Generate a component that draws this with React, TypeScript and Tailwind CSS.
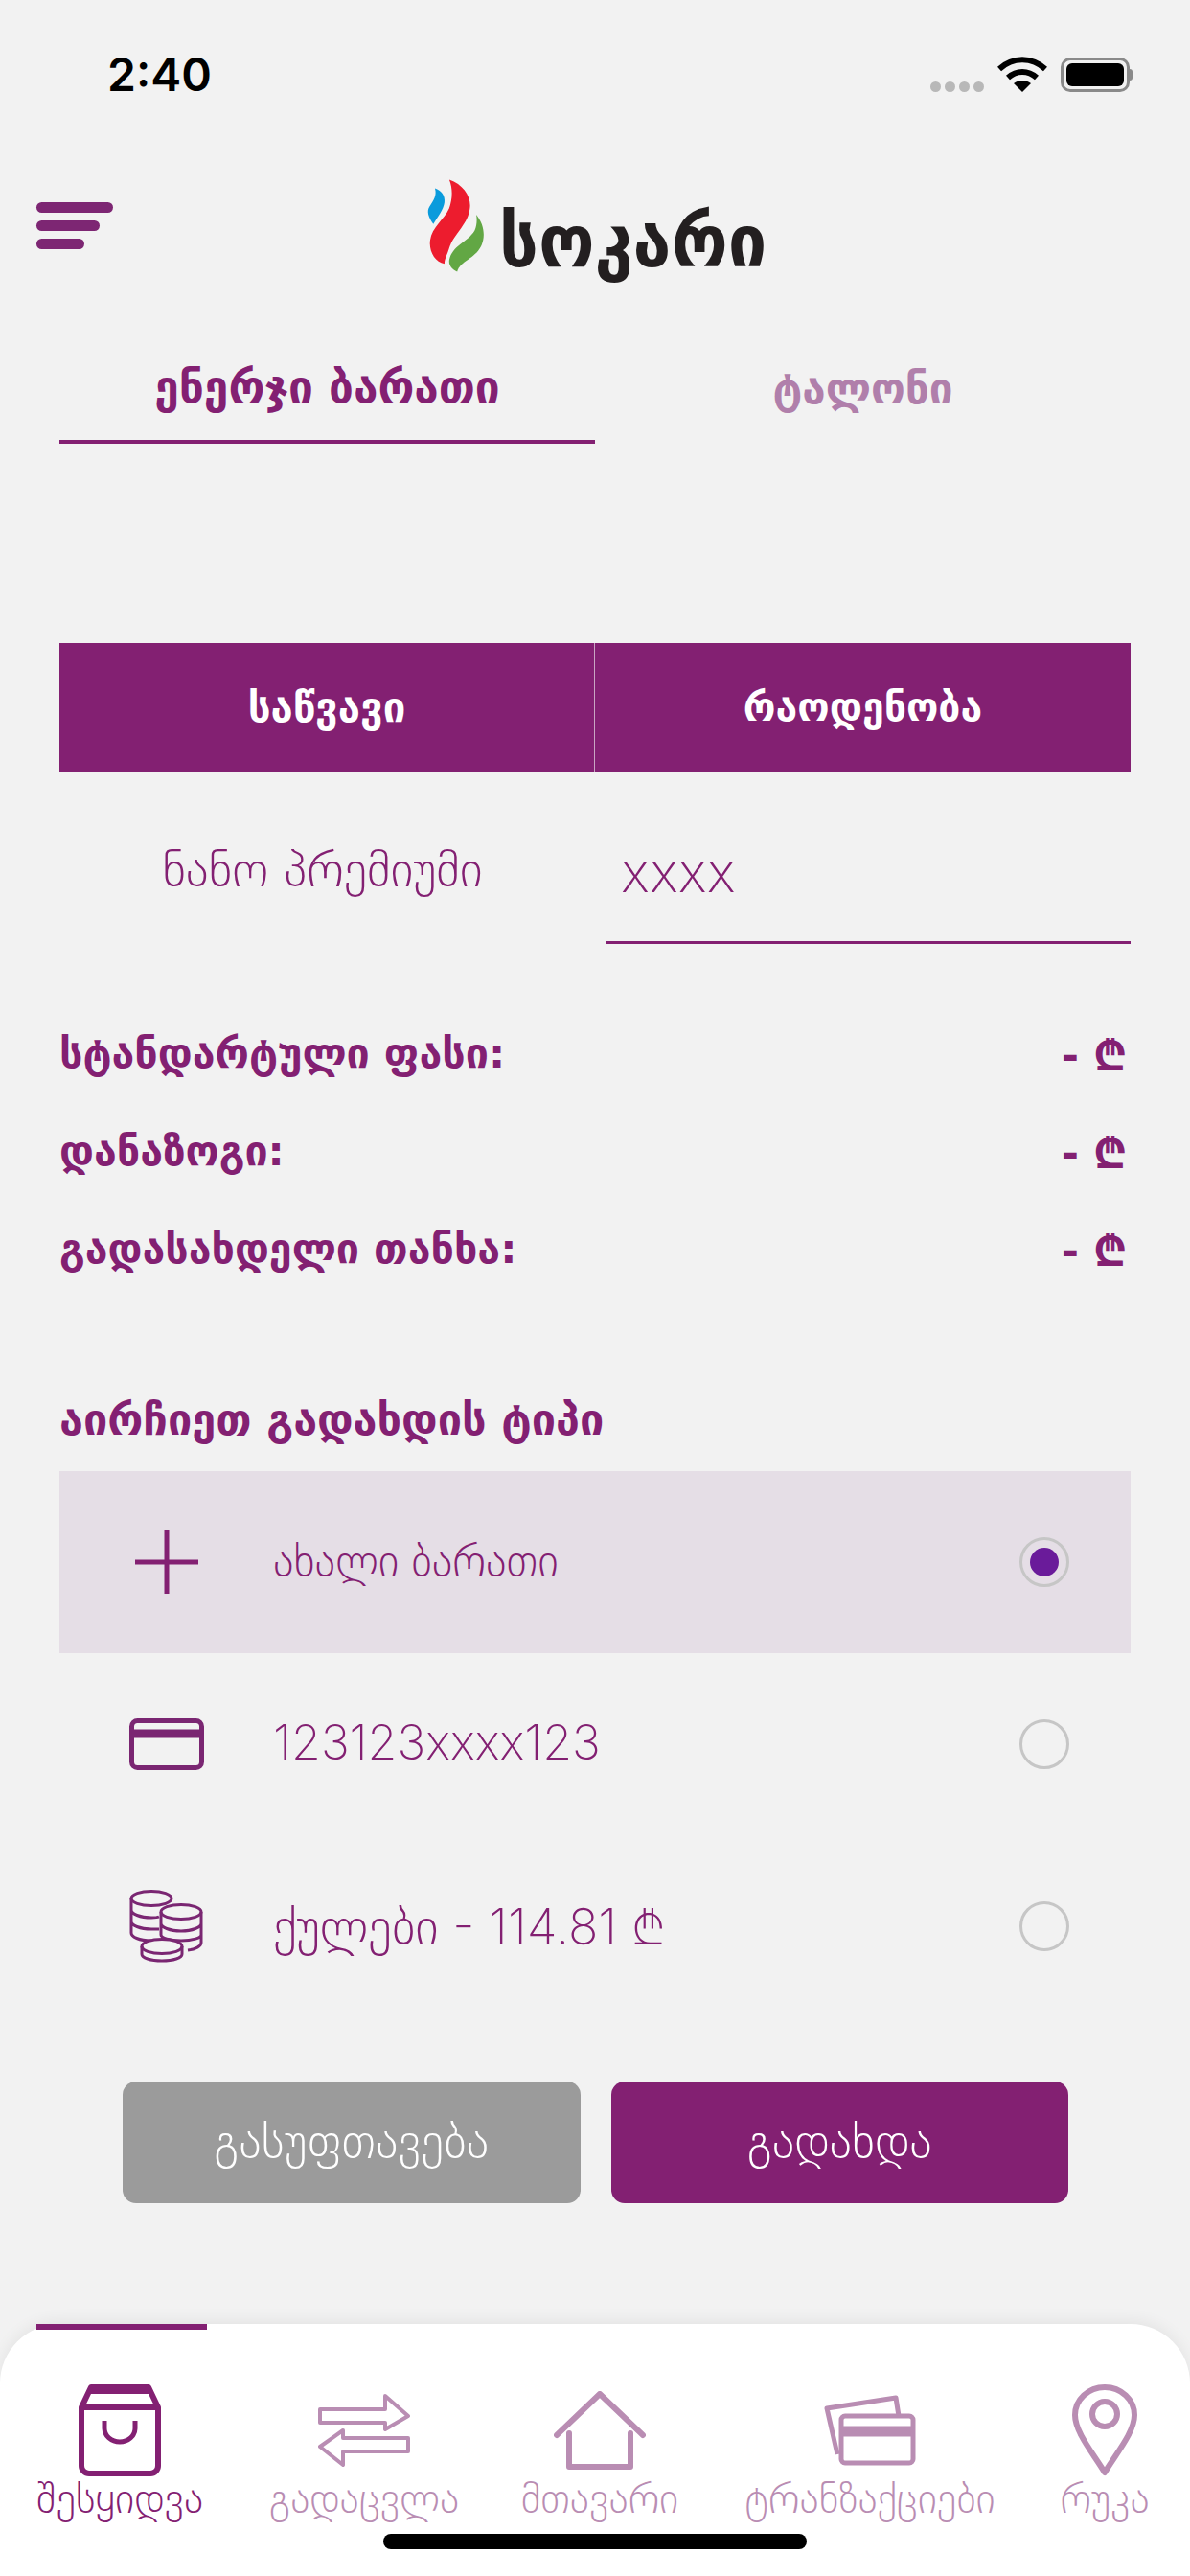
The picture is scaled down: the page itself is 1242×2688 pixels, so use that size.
const PURPLE = "#832072";
const FADED = "#b98db3";

function Flame() {
  return (
    <svg width="62" height="97" viewBox="-2 0 187 290" className="shrink-0">
      <path d="M25 27C45 33 58 50 55 72C52 95 35 115 20 140C5 120-2 100 8 85C20 65 32 50 25 27z" fill="#0a9bdc" />
      <path d="M70 0C115 15 140 55 135 90C130 140 85 170 70 215C62 240 55 250 55 265C25 260 5 225 10 190C15 150 55 125 70 90C80 60 82 30 70 0z" fill="#ed1c2e" />
      <path d="M155 110C180 140 185 180 170 210C150 250 105 255 95 290C75 280 65 265 72 245C85 205 130 195 150 160C157 145 158 125 155 110z" fill="#62a744" />
    </svg>
  );
}

function Radio({ on }: { on?: boolean }) {
  return (
    <span className="flex size-[52px] shrink-0 items-center justify-center rounded-full border-[3px] border-[#c6c6c6]">
      {on && <span className="size-[30px] rounded-full bg-[#6a1b9a]" />}
    </span>
  );
}

function PlusIcon() {
  return (
    <svg width="66" height="66" viewBox="0 0 66 66">
      <path d="M33 0v66M0 33h66" stroke={PURPLE} strokeWidth="5" fill="none" />
    </svg>
  );
}

function CardIcon() {
  return (
    <svg width="78" height="54" viewBox="0 0 78 54" fill="none">
      <rect x="2.5" y="2.5" width="73" height="49" rx="6" stroke="#7a2672" strokeWidth="5" />
      <path d="M2 16h74" stroke="#7a2672" strokeWidth="9" />
    </svg>
  );
}

function CoinsIcon() {
  const c = "#7a2672";
  return (
    <svg width="78" height="76" viewBox="0 0 78 76" fill="none" stroke={c} strokeWidth="3">
      <ellipse cx="23" cy="9" rx="21" ry="7.5" />
      <path d="M2 9v36c0 4 8 8 21 8M2 21c0 4 9 8 21 8 3 0 6 0 8-1M2 33c0 4 9 8 21 8h8" />
      <ellipse cx="54" cy="23" rx="21" ry="7.5" fill="#f2f2f2" />
      <path d="M33 23v24M75 23v32c0 4-6 7-14 8M33 35c0 4 9 8 21 8s21-4 21-8M33 47c0 3 9 6 21 6s21-3 21-6" />
      <ellipse cx="34" cy="59" rx="21" ry="7.5" fill="#f2f2f2" />
      <path d="M13 59v8c0 4 9 7 21 7s21-3 21-7v-8" />
    </svg>
  );
}

function BagIcon() {
  return (
    <svg width="86" height="96" viewBox="0 0 86 96" fill="none" stroke={PURPLE} strokeWidth="6" strokeLinejoin="round">
      <path d="M3 24 13 3h60l10 21v61a8 8 0 0 1-8 8H11a8 8 0 0 1-8-8z" />
      <path d="M3 24h80" />
      <path d="M13 6h60" strokeWidth="8" />
      <path d="M27 38v8a16 14 0 0 0 32 0v-8" strokeWidth="5" />
    </svg>
  );
}

function SwapIcon() {
  return (
    <svg width="96" height="76" viewBox="0 0 96 76" fill="none" stroke={FADED} strokeWidth="4" strokeLinejoin="round">
      <path d="M2 16h68V2l24 21-24 14V30H2z" />
      <path d="M94 46H26V38L2 55l24 19V60h68z" />
    </svg>
  );
}

function HomeIcon() {
  return (
    <svg width="96" height="82" viewBox="0 0 96 82" fill="none" stroke={FADED} strokeWidth="6" strokeLinecap="round" strokeLinejoin="round">
      <path d="M3 46 48 3l45 43" />
      <path d="M16 44v35h64V44" />
    </svg>
  );
}

function CardsIcon() {
  return (
    <svg width="96" height="74" viewBox="0 0 96 74" fill="none" stroke={FADED} strokeWidth="5" strokeLinejoin="round">
      <path d="M14 62 3 14 75 3l3 19" />
      <rect x="18" y="22" width="75" height="49" rx="4" />
      <path d="M18 38h75" strokeWidth="11" />
    </svg>
  );
}

function PinIcon() {
  return (
    <svg width="68" height="96" viewBox="0 0 68 96" fill="none" stroke={FADED} strokeWidth="6">
      <path d="M34 92C22 72 3 50 3 32a31 29 0 0 1 62 0c0 18-19 40-31 60z" strokeLinejoin="round" />
      <circle cx="34" cy="31" r="13" />
    </svg>
  );
}

function PriceRow({ label, className }: { label: string; className: string }) {
  return (
    <div className={`flex items-center justify-between ${className}`}>
      <span className="text-[43px] font-bold leading-none">{label}</span>
      <span className="pr-[4px] pt-[6px] text-[44px] font-bold leading-none">- ₾</span>
    </div>
  );
}

function PayOption({ icon, label, size, on }: { icon: React.ReactNode; label: string; size: string; on?: boolean }) {
  return (
    <div className={`flex h-[190px] items-center pr-[64px] ${on ? "bg-[#e5dee6]" : ""}`}>
      <div className="flex w-[223px] shrink-0 items-center justify-center">{icon}</div>
      <span className={`flex-1 font-extralight leading-none font-['Inter','DejaVu_Sans',sans-serif] ${size}`}>{label}</span>
      <Radio on={on} />
    </div>
  );
}

function NavItem({ icon, label, width, active }: { icon: React.ReactNode; label: string; width: string; active?: boolean }) {
  return (
    <div className={`flex flex-col items-center ${width} ${active ? "text-[#832072]" : "text-[#b98db3]"}`}>
      <div className="flex h-[98px] items-center">{icon}</div>
      <span className="mt-[-4px] whitespace-nowrap text-[43px] font-extralight leading-[52px]">{label}</span>
    </div>
  );
}

export default function App() {
  return (
    <div className="flex h-[2688px] w-[1242px] flex-col overflow-hidden bg-[#f2f2f2] text-[#832072] font-['DejaVu_Sans','Noto_Sans',sans-serif]">
      {/* status bar */}
      <div className="flex h-[156px] shrink-0 items-center justify-between pl-[112px] pr-[60px]">
        <span className="text-[48px] font-semibold leading-none text-black font-['Inter',sans-serif]">2:40</span>
        <div className="flex items-center gap-[14px]">
          <div className="mt-[24px] flex gap-[4px]">
            <span className="h-[11px] w-[11px] rounded-full bg-[#b8b8b8]" />
            <span className="h-[11px] w-[11px] rounded-full bg-[#b8b8b8]" />
            <span className="h-[11px] w-[11px] rounded-full bg-[#b8b8b8]" />
            <span className="h-[11px] w-[11px] rounded-full bg-[#b8b8b8]" />
          </div>
          <svg width="52" height="38" viewBox="0 0 52 38" fill="none" stroke="#000" strokeWidth="6">
            <path d="M2 13c14-13 34-13 48 0" />
            <path d="M11 22c9-8 21-8 30 0" />
            <path d="M26 37 17 28c5-4 13-4 18 0z" fill="#000" stroke="none" />
          </svg>
          <div className="flex items-center">
            <div className="flex h-[36px] w-[72px] items-center rounded-[10px] border-[3px] border-[#8a8a8a] p-[3px]">
              <div className="h-full w-full rounded-[6px] bg-black" />
            </div>
            <div className="h-[12px] w-[3px] rounded-r-full bg-[#8a8a8a]" />
          </div>
        </div>
      </div>

      {/* header */}
      <div className="mt-[13px] flex h-[132px] shrink-0 items-center pl-[38px]">
        <div className="flex w-[80px] flex-col gap-[8px]">
          <span className="h-[11px] w-[80px] rounded-full bg-[#7d2673]" />
          <span className="h-[11px] w-[66px] rounded-full bg-[#7d2673]" />
          <span className="h-[11px] w-[50px] rounded-full bg-[#7d2673]" />
        </div>
        <div className="ml-[327px] flex items-end gap-[14px]">
          <Flame />
          <span className="origin-bottom scale-y-[1.04] text-[72px] font-bold leading-[62px] text-[#231f20]">სოკარი</span>
        </div>
      </div>

      {/* tabs */}
      <div className="mx-[62px] mt-[39px] grid h-[123px] shrink-0 grid-cols-2">
        <div className="flex items-start justify-center border-b-[4px] border-[#832072] pt-[41px]">
          <span className="text-[46px] font-bold leading-none">ენერჯი ბარათი</span>
        </div>
        <div className="flex items-start justify-center pt-[44px]">
          <span className="text-[44px] font-bold leading-none text-[#b07fab]">ტალონი</span>
        </div>
      </div>

      {/* fuel table */}
      <div className="mx-[62px] mt-[208px] grid h-[135px] shrink-0 grid-cols-2 bg-[#832072] text-white">
        <div className="flex items-center justify-center border-r border-[#c9a5c3] text-[42px] font-bold">საწვავი</div>
        <div className="flex items-center justify-center text-[41px] font-bold">რაოდენობა</div>
      </div>
      <div className="mx-[62px] grid h-[179px] shrink-0 grid-cols-2">
        <div className="flex items-start justify-center pt-[76px] pr-[10px] text-[51px] font-extralight leading-none">ნანო პრემიუმი</div>
        <div className="ml-[11px] flex items-end border-b-[3px] border-[#832072] pb-[43px] pl-[16px] text-[58px] font-extralight leading-none font-['Inter',sans-serif]">xxxx</div>
      </div>

      {/* prices */}
      <div className="mx-[62px] mt-[89px] flex shrink-0 flex-col">
        <PriceRow label="სტანდარტული ფასი:" className="h-[50px]" />
        <PriceRow label="დანაზოგი:" className="mt-[52px] h-[50px]" />
        <PriceRow label="გადასახდელი თანხა:" className="mt-[52px] h-[50px]" />
      </div>

      <div className="mx-[62px] mt-[129px] flex shrink-0 flex-col">
        <h2 className="text-[45px] font-bold leading-[50px]">აირჩიეთ გადახდის ტიპი</h2>
        <div className="mt-[28px] flex flex-col">
          <PayOption on icon={<PlusIcon />} label="ახალი ბარათი" size="pb-[4px] text-[46px]" />
          <PayOption icon={<CardIcon />} label="123123xxxx123" size="pb-[4px] text-[50px]" />
          <PayOption icon={<CoinsIcon />} label="ქულები - 114.81 ₾" size="pt-[2px] text-[52px]" />
        </div>
      </div>

      {/* buttons */}
      <div className="mt-[67px] flex shrink-0 gap-[32px] pl-[128px] pr-[127px]">
        <button className="h-[127px] flex-1 rounded-[14px] bg-[#9b9b9b] text-[50px] font-extralight text-white">გასუფთავება</button>
        <button className="h-[127px] flex-1 rounded-[14px] bg-[#832072] text-[50px] font-extralight text-white">გადახდა</button>
      </div>

      {/* bottom nav */}
      <div className="relative mt-auto h-[263px] shrink-0 rounded-t-[62px] bg-white shadow-[0_-4px_16px_rgba(0,0,0,0.06)]">
        <div className="absolute left-[38px] top-0 h-[6px] w-[178px] bg-[#832072]" />
        <div className="flex pl-[38px] pt-[62px]">
          <NavItem active icon={<BagIcon />} label="შესყიდვა" width="w-[174px]" />
          <NavItem icon={<SwapIcon />} label="გადაცვლა" width="w-[336px]" />
          <NavItem icon={<HomeIcon />} label="მთავარი" width="w-[156px]" />
          <NavItem icon={<CardsIcon />} label="ტრანზაქციები" width="w-[408px]" />
          <NavItem icon={<PinIcon />} label="რუკა" width="w-[82px]" />
        </div>
        <div className="absolute bottom-[28px] left-[400px] h-[16px] w-[442px] rounded-full bg-black" />
      </div>
    </div>
  );
}
